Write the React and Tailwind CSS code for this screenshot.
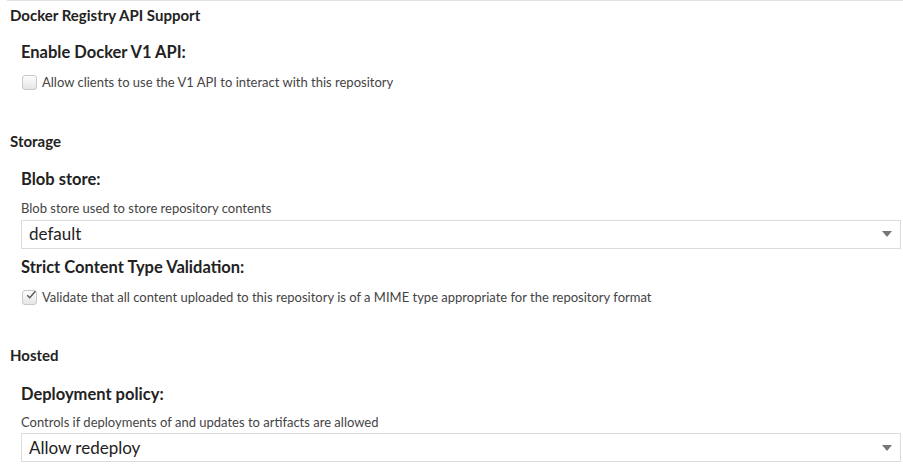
import React from 'react';

const font = { fontFamily: 'Lato, "Open Sans", sans-serif' };

const Checkbox = ({ checked }) => (
  <span className="w-[15px] h-[15px] shrink-0 rounded-[3px] border border-[#c8c8c8] bg-gradient-to-b from-[#fdfdfd] to-[#e6e6e6] flex items-center justify-center">
    {checked && (
      <svg width="16" height="14" viewBox="0 0 16 14" className="-mt-[4px] ml-[3px]">
        <path d="M2 7.5 L6 11.5 L15 1" fill="none" stroke="#555" strokeWidth="2.2" />
      </svg>
    )}
  </span>
);

const Select = ({ value }) => (
  <div className="h-[29px] mr-[2px] border border-[#dcdcdc] flex items-center justify-between pl-[7px] pr-[8px]">
    <span className="text-[17px] text-[#222]">{value}</span>
    <svg width="10" height="6" viewBox="0 0 10 6">
      <path d="M0 0 H10 L5 6 Z" fill="#777" />
    </svg>
  </div>
);

const Section = ({ title, children }) => (
  <div>
    <h3 className="text-[15px] font-bold text-[#222] leading-[18px] pl-[10px]">{title}</h3>
    <div className="pl-[21px]">{children}</div>
  </div>
);

const FieldTitle = ({ children }) => (
  <h4 className="text-[16.5px] font-bold text-[#222] leading-[22px]">{children}</h4>
);

export default function App() {
  return (
    <div style={font} className="w-[903px] h-[464px] bg-white overflow-hidden">
      <div className="ml-[7px] h-px bg-[#e3e3e3]" />
      <div className="pt-[5px]">
        <Section title="Docker Registry API Support">
          <div className="mt-[17px]"><FieldTitle>Enable Docker V1 API:</FieldTitle></div>
          <label className="mt-[10px] flex items-center gap-[5px] pl-[1px]">
            <Checkbox />
            <span className="text-[13px] text-[#444]">Allow clients to use the V1 API to interact with this repository</span>
          </label>
        </Section>

        <div className="mt-[39px]">
          <Section title="Storage">
            <div className="mt-[18px]"><FieldTitle>Blob store:</FieldTitle></div>
            <p className="mt-[10px] text-[13px] text-[#444] leading-[16px]">Blob store used to store repository contents</p>
            <div className="mt-[4px]"><Select value="default" /></div>
            <div className="mt-[7px]"><FieldTitle>Strict Content Type Validation:</FieldTitle></div>
            <label className="mt-[10px] flex items-center gap-[5px] pl-[1px]">
              <Checkbox checked />
              <span className="text-[13px] text-[#444]">Validate that all content uploaded to this repository is of a MIME type appropriate for the repository format</span>
            </label>
          </Section>
        </div>

        <div className="mt-[39px]">
          <Section title="Hosted">
            <div className="mt-[19px]"><FieldTitle>Deployment policy:</FieldTitle></div>
            <p className="mt-[9px] text-[13px] text-[#444] leading-[16px]">Controls if deployments of and updates to artifacts are allowed</p>
            <div className="mt-[3px]"><Select value="Allow redeploy" /></div>
          </Section>
        </div>
      </div>
    </div>
  );
}
